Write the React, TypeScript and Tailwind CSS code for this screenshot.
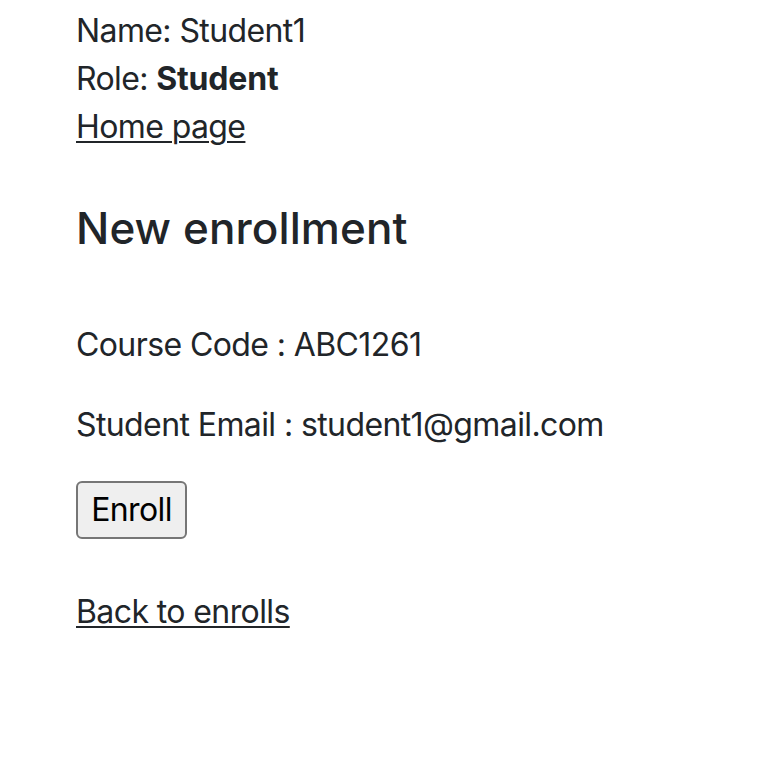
export default function App() {
  return (
    <div className="min-h-[784px] bg-white pl-[76px] pt-[7px] text-[32px] leading-[48px] tracking-[-0.6px] text-[#212529] [font-family:Inter,'Noto_Sans',sans-serif]">
      <p>Name: Student1</p>
      <p>
        Role: <b className="font-bold tracking-[-0.2px]">Student</b>
      </p>
      <a href="#" className="underline decoration-[2px] underline-offset-[3px]">
        Home page
      </a>
      <h2 className="mt-[51px] text-[44px] font-medium leading-[53px] tracking-[0.1px]">New enrollment</h2>
      <p className="mt-[66px]">Course Code : ABC1261</p>
      <p className="mt-[32px]">Student Email : student1@gmail.com</p>
      <div className="mt-[32px]">
        <button className="h-[58px] w-[111px] rounded-[6px] border-2 border-[#767676] bg-[#efefef] text-[32px] text-black">
          Enroll
        </button>
      </div>
      <div className="mt-[49px]">
        <a href="#" className="underline decoration-[2px] underline-offset-[3px]">
          Back to enrolls
        </a>
      </div>
    </div>
  );
}
